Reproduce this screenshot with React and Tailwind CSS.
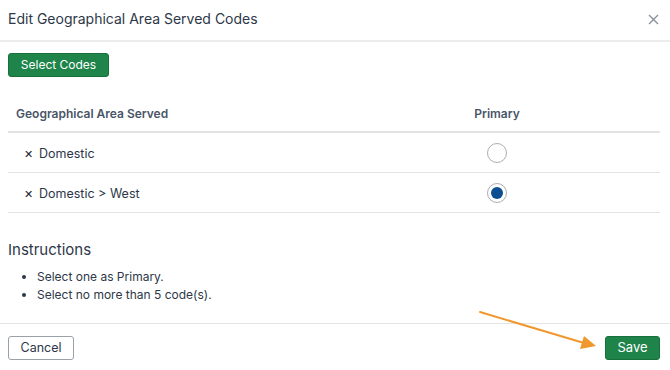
import React, { useState } from "react";

const rows = [
  { id: "domestic", label: "Domestic" },
  { id: "west", label: "Domestic > West" },
];

const App = () => {
  const [primary, setPrimary] = useState("west");

  return (
    <div className="relative w-[670px] h-[370px] bg-white text-[#2d3748] font-['Inter',sans-serif] overflow-hidden">
      {/* Header */}
      <div className="flex items-center justify-between h-[42px] pl-2 pr-[11px] border-b-2 border-[#ececec]">
        <h2 className="text-[14px] leading-none pb-[2px]">Edit Geographical Area Served Codes</h2>
        <button className="text-[#8a919c] pb-[2px]">
          <svg width="11" height="11" viewBox="0 0 11 11" fill="none" stroke="currentColor" strokeWidth="1.4">
            <path d="M1 1l9 9M10 1l-9 9" />
          </svg>
        </button>
      </div>

      {/* Body */}
      <div className="px-2">
        <button className="mt-[11px] h-[24px] w-[101px] rounded-[3px] bg-[#1e8449] border border-[#18713c] text-white text-[12px]">
          Select Codes
        </button>

        <div className="mt-[18px] mr-[2px]">
          <div className="grid grid-cols-[1fr_326px] h-[38px] items-center border-b-2 border-[#e3e3e3] text-[12px] font-semibold text-[#4a5568]">
            <div className="pl-2 pt-[1px]">Geographical Area Served</div>
            <div className="text-center pt-[1px]">Primary</div>
          </div>
          {rows.map((row) => (
            <div
              key={row.id}
              className="grid grid-cols-[1fr_326px] h-[40px] items-center border-b border-[#e3e3e3] text-[12.5px]"
            >
              <div className="flex items-center pl-4 pt-[3px]">
                <span className="text-[11px] mr-[6px] text-[#1a202c]">✕</span>
                <span>{row.label}</span>
              </div>
              <div className="flex justify-center pt-[1px]">
                <button
                  onClick={() => setPrimary(row.id)}
                  className="w-[20px] h-[20px] rounded-full border border-[#a8adb4] bg-white flex items-center justify-center"
                >
                  {primary === row.id && <span className="w-[12px] h-[12px] rounded-full bg-[#0b4f91]" />}
                </button>
              </div>
            </div>
          ))}
        </div>

        <h3 className="mt-[27px] text-[15px] leading-5">Instructions</h3>
        <ul className="mt-[8px] list-disc pl-[29px] text-[12px] leading-[18px]">
          <li>Select one as Primary.</li>
          <li>Select no more than 5 code(s).</li>
        </ul>
      </div>

      {/* Footer */}
      <div className="absolute left-0 right-0 bottom-0 h-[47px] border-t border-[#e3e3e3] flex items-start justify-between px-2 pt-[12px]">
        <button className="h-[24px] w-[66px] rounded-[3px] border border-[#9aa1aa] bg-white text-[12.5px] text-[#2d3748]">
          Cancel
        </button>
        <button className="h-[24px] w-[55px] mr-[2px] rounded-[3px] bg-[#1e8449] border border-[#18713c] text-white text-[13px]">
          Save
        </button>
      </div>

      {/* Annotation arrow */}
      <svg className="absolute left-0 top-0 pointer-events-none" width="670" height="370">
        <line x1="480" y1="312" x2="584" y2="343" stroke="#f0982e" strokeWidth="2" strokeLinecap="round" />
        <polygon points="596,346 580,349 584,336" fill="#f0982e" />
      </svg>
    </div>
  );
};

export default App;
